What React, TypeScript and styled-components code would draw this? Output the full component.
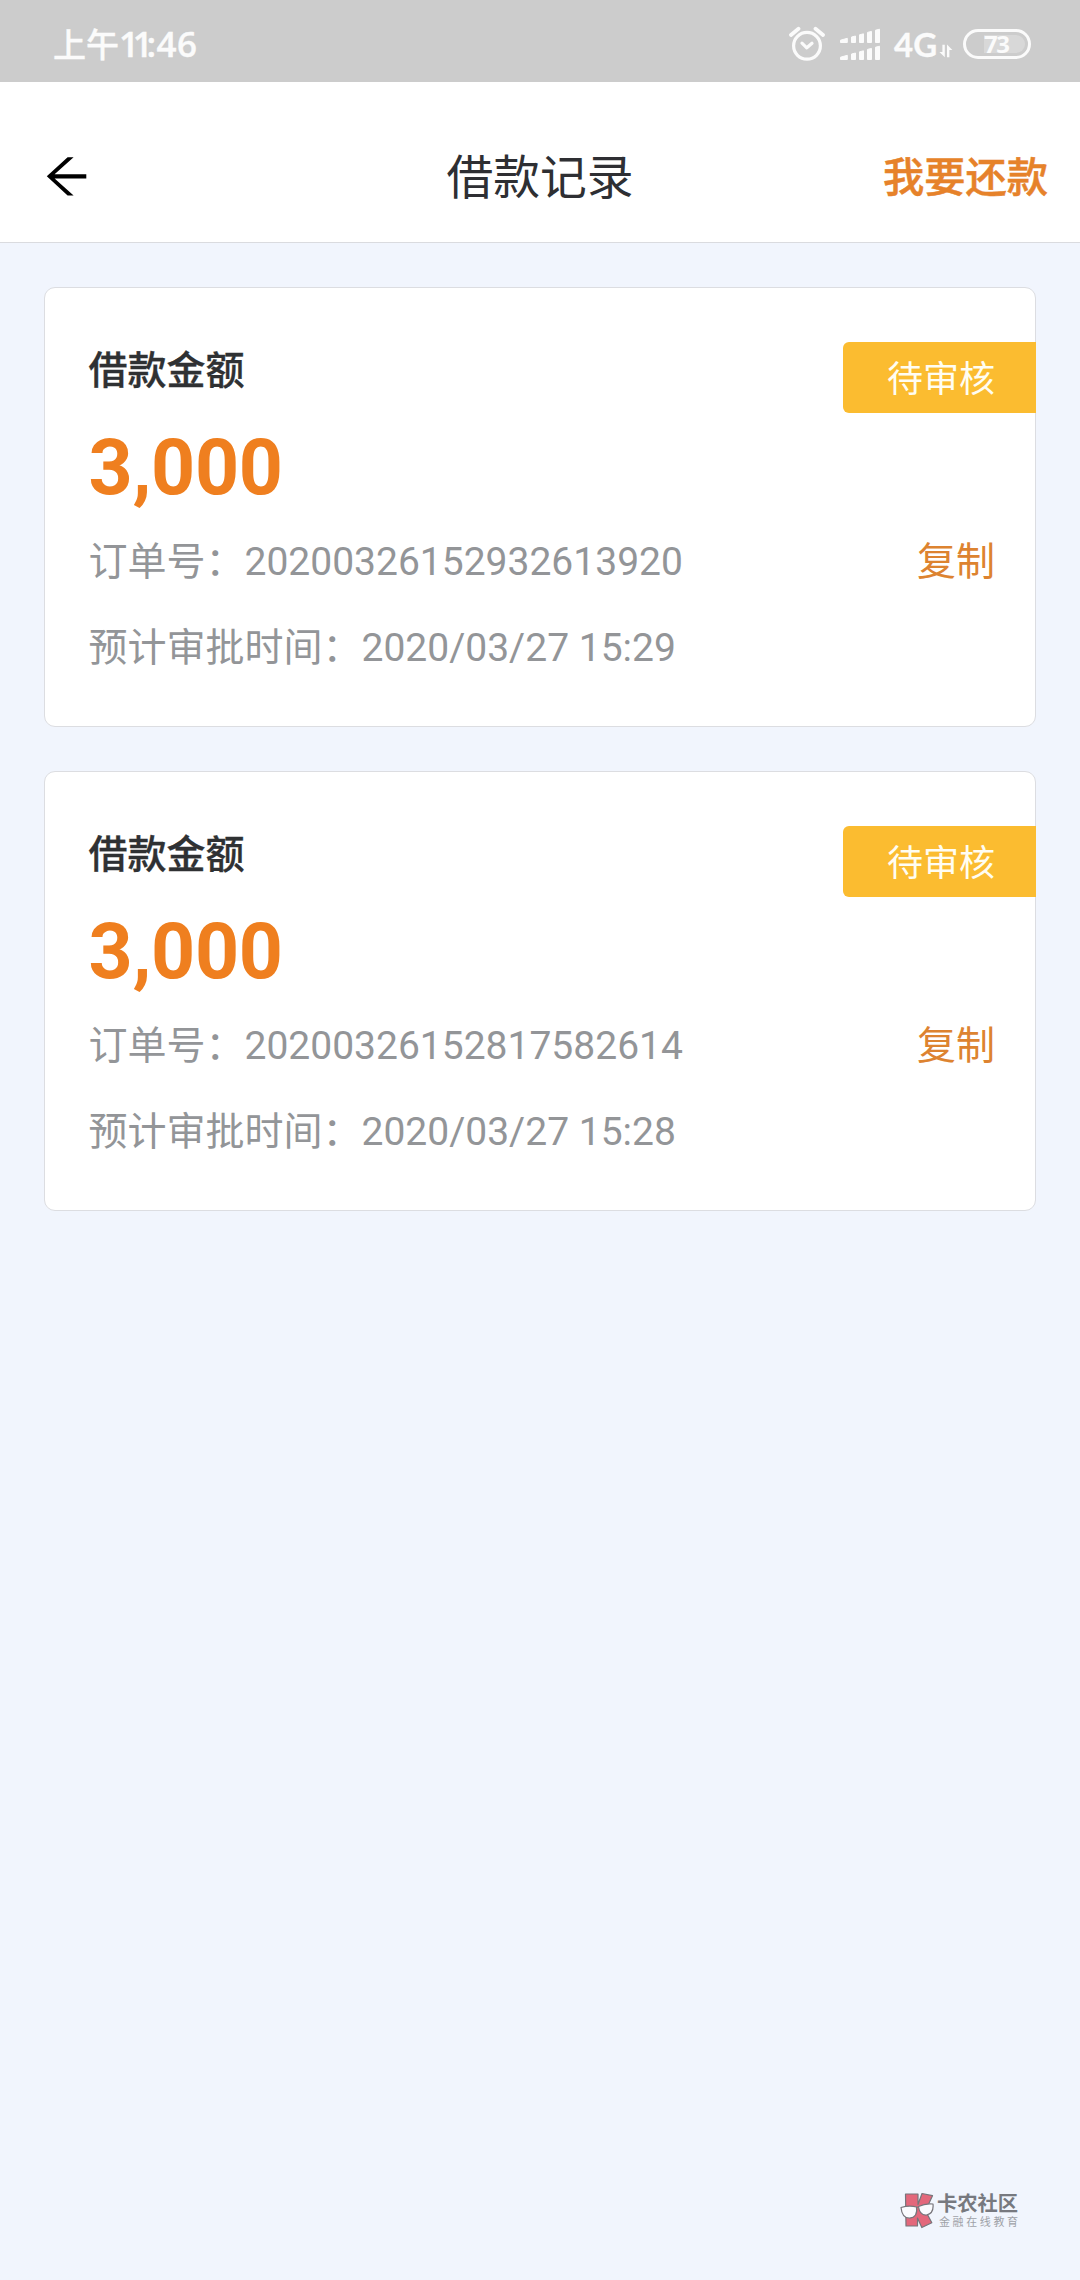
import React from "react";
import styled, { createGlobalStyle } from "styled-components";

const GlobalStyle = createGlobalStyle`
  * { box-sizing: border-box; }
  body {
    margin: 0;
    background: #f1f5fd;
    font-family: Roboto, "Noto Sans CJK SC", sans-serif;
  }
`;

const Screen = styled.div`
  display: flex;
  flex-direction: column;
  width: 1080px;
  height: 2280px;
  background: #f1f5fd;
`;

const StatusBar = styled.div`
  display: flex;
  align-items: flex-start;
  justify-content: space-between;
  height: 82px;
  padding: 20px 49px 0 53px;
  background: #cccccc;
  color: #fbfbfb;
`;

const Clock = styled.div`
  display: flex;
  font: 500 33px/46px "Noto Sans CJK SC", sans-serif;
  -webkit-text-stroke: 0.4px #fbfbfb;
`;

const ClockDigits = styled.span<{ $spacing: number }>`
  font: 600 35px/48px "Open Sans", sans-serif;
  letter-spacing: ${(p) => p.$spacing}px;
`;

const StatusIcons = styled.div`
  display: flex;
  height: 50px;
`;

const SignalSlot = styled.span`
  display: flex;
  margin-left: 14px;
`;

const Network = styled.span`
  margin-left: 13px;
  width: 45px;
  font: 700 33px/49px Lato, sans-serif;
  -webkit-text-stroke: 0.3px #fbfbfb;
`;

const Battery = styled.div`
  display: flex;
  width: 68px;
  height: 30px;
  margin: 9px 0 0 10px;
  padding: 3px 3px 3px 18px;
  border: 3px solid #fbfbfb;
  border-radius: 15px;
`;

const BatteryLevel = styled.span`
  flex: 1;
  border-radius: 0 9px 9px 0;
  background: #d8d8d8;
  font: 700 24px/18px "Open Sans", sans-serif;
  letter-spacing: -1.4px;
`;

const Header = styled.header`
  display: grid;
  grid-template-columns: 1fr auto 1fr;
  align-items: start;
  height: 161px;
  padding: 66px 32px 0 46px;
  border-bottom: 1px solid #dadbdf;
  background: #ffffff;
`;

const BackButton = styled.button`
  display: flex;
  width: 42px;
  height: 60px;
  padding: 8px 0 0;
  border: 0;
  background: none;
`;

const Title = styled.h1`
  margin: 0 0 0 -14px;
  color: #2e2f33;
  font-size: 46.75px;
  font-weight: 400;
  line-height: 60px;
`;

const RepayLink = styled.a`
  justify-self: end;
  color: #e6822a;
  font-size: 41.25px;
  font-weight: 500;
  line-height: 60px;
  -webkit-text-stroke: 0.5px #e6822a;
`;

const List = styled.main`
  display: flex;
  flex-direction: column;
  gap: 44px;
  padding: 44px;
`;

const Card = styled.article`
  height: 440px;
  padding: 54px 0 0 43.5px;
  border: 1px solid #dcdde1;
  border-radius: 11px;
  background: #ffffff;
`;

const CardTop = styled.div`
  display: flex;
  align-items: flex-start;
  justify-content: space-between;
  height: 71px;
`;

const CardTitle = styled.h2`
  margin: 4px 0 0;
  color: #2f3133;
  font-size: 39px;
  font-weight: 500;
  line-height: 50px;
  -webkit-text-stroke: 0.3px #2f3133;
`;

const Badge = styled.span`
  width: 193px;
  height: 71px;
  margin-right: -1px;
  padding-left: 44px;
  border-radius: 6px 0 0 6px;
  background: #fbbc30;
  color: #fffdf2;
  font-size: 36px;
  line-height: 77px;
`;

const Amount = styled.div`
  margin-top: 10px;
  color: #ef7f1f;
  font-size: 77px;
  font-weight: 700;
  line-height: 90px;
  letter-spacing: -0.3px;
`;

const InfoRow = styled.div<{ $gap: number }>`
  display: flex;
  justify-content: space-between;
  margin-top: ${(p) => p.$gap}px;
  padding-right: 40px;
  color: #939598;
  font-size: 39px;
  line-height: 50px;
`;

const CopyButton = styled.a`
  color: #dd8330;
`;

const Watermark = styled.footer`
  display: flex;
  align-items: flex-start;
  margin-top: auto;
  height: 88px;
  padding-left: 900px;
`;

const Brand = styled.div`
  display: flex;
  flex-direction: column;
  margin-left: 3px;
`;

const BrandName = styled.strong`
  margin-top: 1px;
  color: #77797f;
  font-size: 20.3px;
  font-weight: 700;
  line-height: 23px;
`;

const BrandSlogan = styled.span`
  margin-left: 2px;
  color: #9fa2a8;
  font-size: 11px;
  line-height: 14px;
  letter-spacing: 2.6px;
`;

const AlarmIcon = () => (
  <svg width="36" height="50" viewBox="789 20 36 50" fill="none" stroke="#fbfbfb" strokeWidth="3.2" strokeLinecap="round">
    <circle cx="807" cy="45.8" r="13.4" />
    <path d="M802 43.2l4.8 4.6 5.2-4.6" strokeLinejoin="round" />
    <path d="M791 35l7.5-6.2M823 35l-7.5-6.2" strokeWidth="3.8" />
  </svg>
);

const SignalIcon = () => (
  <svg width="42" height="50" viewBox="839 20 42 50" fill="#fbfbfb" stroke="#fbfbfb" strokeWidth="1" strokeLinejoin="round">
    {[0, 17].map((dy) => (
      <path
        key={dy}
        transform={`translate(0 ${dy})`}
        d="M840.5 40.2l6.8-1.9v4.2h-6.8zM851.5 37l4-1v6.5h-4zM859.5 34.8l4-1v8.7h-4zM867.5 32.4l4-1v11.1h-4zM875.5 30.2l4-1v13.3h-4z"
      />
    ))}
  </svg>
);

const DataIcon = () => (
  <svg width="14" height="50" viewBox="940 20 14 50" fill="#fbfbfb">
    <path d="M943.4 44.8h2.4v12.4l-5.4-5.2h3zM948 57.2V44.6l5.4 5.4h-3v7.2z" />
  </svg>
);

const BackIcon = () => (
  <svg width="41" height="40" viewBox="46 156 41 40">
    <path d="M46.8 176.3L67.6 157.3H73.6L54.6 174.2H86.3V178.5H54.6L73.6 195.6H67.6Z" />
  </svg>
);

const BrandLogo = () => (
  <svg width="34" height="38" viewBox="900 2192 34 38" stroke="#77757b" strokeWidth="1.2" strokeLinejoin="round">
    <path
      fill="#e3677b"
      d="M905.5 2194h12.5v10.5l4-11 10.5 2.2-7 15 6.3 12-10 4.8-4.3-9.5v8h-11.5z"
    />
    <path fill="#fafbfe" d="M901 2207.5q8.5-2.5 15.5-.5 1.5 10.5-7 11.2-7.5 0-8.5-10.7z" />
    <path fill="#fafbfe" d="M918.5 2206.5q7-3.5 14.5-2.5 1 9.5-6.5 11-7 .5-8-8.5z" />
    <path fill="none" d="M916.5 2207.5l2-.7" />
  </svg>
);

const records = [
  { amount: "3,000", order: "20200326152932613920", eta: "2020/03/27 15:29" },
  { amount: "3,000", order: "20200326152817582614", eta: "2020/03/27 15:28" },
];

export default function App() {
  return (
    <>
      <GlobalStyle />
      <Screen lang="zh-CN">
        <StatusBar>
          <Clock>
            上午
            <ClockDigits $spacing={-6.3}>11</ClockDigits>
            <ClockDigits $spacing={0.5}>:46</ClockDigits>
          </Clock>
          <StatusIcons>
            <AlarmIcon />
            <SignalSlot>
              <SignalIcon />
            </SignalSlot>
            <Network>4G</Network>
            <DataIcon />
            <Battery>
              <BatteryLevel>73</BatteryLevel>
            </Battery>
          </StatusIcons>
        </StatusBar>
        <Header>
          <BackButton aria-label="返回">
            <BackIcon />
          </BackButton>
          <Title>借款记录</Title>
          <RepayLink>我要还款</RepayLink>
        </Header>
        <List>
          {records.map((r) => (
            <Card key={r.order}>
              <CardTop>
                <CardTitle>借款金额</CardTitle>
                <Badge>待审核</Badge>
              </CardTop>
              <Amount>{r.amount}</Amount>
              <InfoRow $gap={24}>
                <span>订单号：{r.order}</span>
                <CopyButton>复制</CopyButton>
              </InfoRow>
              <InfoRow $gap={36}>
                <span>预计审批时间：{r.eta}</span>
              </InfoRow>
            </Card>
          ))}
        </List>
        <Watermark>
          <BrandLogo />
          <Brand>
            <BrandName>卡农社区</BrandName>
            <BrandSlogan>金融在线教育</BrandSlogan>
          </Brand>
        </Watermark>
      </Screen>
    </>
  );
}
